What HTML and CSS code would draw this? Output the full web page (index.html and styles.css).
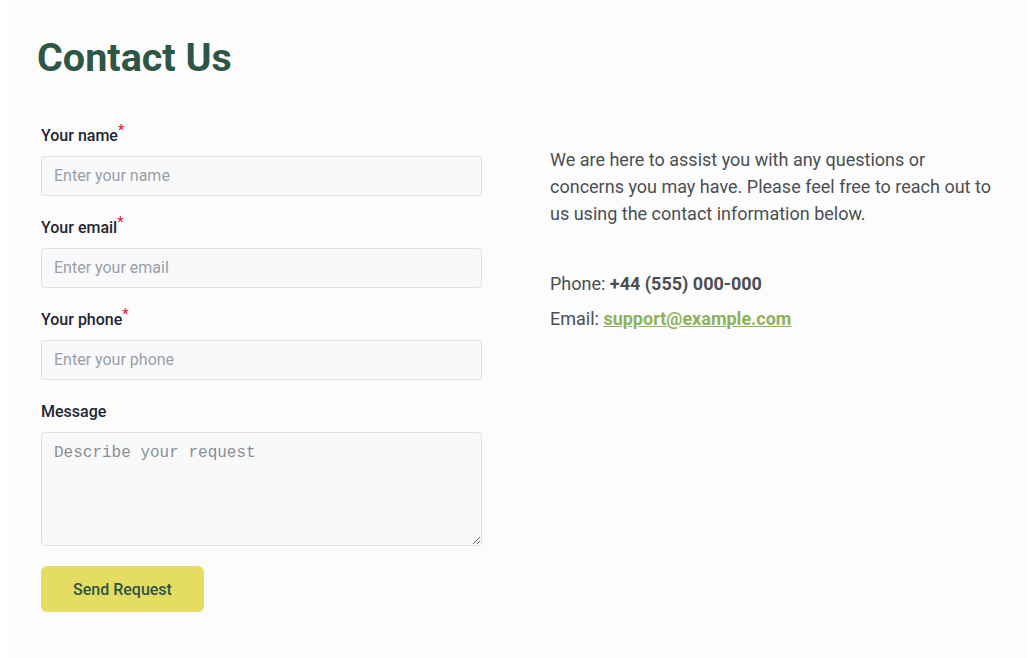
FILE: index.html
```html
<!DOCTYPE html>
<html lang="en">
<head>
  <meta charset="UTF-8">
  <title>Contact Us</title>
  <link rel="stylesheet" href="styles.css">
</head>
<body>

  <div class="contact-page">
    <h1>Contact Us</h1>

    <div class="contact-grid">
      <form class="contact-form">
        <div class="field">
          <label for="name">Your name<span class="req">*</span></label>
          <input type="text" id="name" placeholder="Enter your name">
        </div>
        <div class="field">
          <label for="email">Your email<span class="req">*</span></label>
          <input type="email" id="email" placeholder="Enter your email">
        </div>
        <div class="field">
          <label for="phone">Your phone<span class="req">*</span></label>
          <input type="text" id="phone" placeholder="Enter your phone">
        </div>
        <div class="field">
          <label for="message">Message</label>
          <textarea id="message" placeholder="Describe your request"></textarea>
        </div>
        <button type="submit">Send Request</button>
      </form>

      <div class="contact-info">
        <p class="intro">We are here to assist you with any questions or concerns you may have. Please feel free to reach out to us using the contact information below.</p>
        <p class="line">Phone: <strong>+44 (555) 000-000</strong></p>
        <p class="line">Email: <a href="#">support@example.com</a></p>
      </div>
    </div>
  </div>

</body>
</html>
```

FILE: styles.css
```css
body {
  font-family: Roboto, "Liberation Sans", Arial, sans-serif;
  background-color: #ffffff;
  margin: 0 8px;
}

.contact-page {
  background-color: #fcfcfc;
  padding: 33px 33px 46px 33px;
}

h1 {
  margin: 0 0 41px -4px;
  font-size: 39.5px;
  line-height: 50px;
  font-weight: 700;
  color: #2e5646;
}

.contact-grid {
  display: grid;
  grid-template-columns: 441px 1fr;
  gap: 68px;
}

.field {
  margin-bottom: 20px;
}

.field label {
  display: block;
  font-size: 16px;
  line-height: 24px;
  font-weight: 500;
  color: #1f2633;
  margin-bottom: 8px;
}

.req {
  color: #e11d48;
  font-size: 14px;
  vertical-align: 6px;
  line-height: 0;
}

.field input, .field textarea {
  display: block;
  box-sizing: border-box;
  width: 100%;
  background-color: #f8f9fb;
  border: 1px solid #dfe1e4;
  border-radius: 4px;
  color: #1f2633;
}

.field input {
  height: 40px;
  padding: 0 12px 1px 12px;
  font-family: Roboto, "Liberation Sans", Arial, sans-serif;
  font-size: 16px;
}

.field textarea {
  height: 114px;
  padding: 8px 12px;
  font-family: "Liberation Mono", monospace;
  font-size: 16px;
  line-height: 24px;
}

.field input::placeholder {
  color: #9a9fa7;
}

.field textarea::placeholder {
  color: #8b8e93;
}

button {
  display: block;
  margin-top: 0;
  width: 163px;
  height: 46px;
  background-color: #e4dd62;
  color: #2e5646;
  border: none;
  border-radius: 6px;
  font-family: Roboto, "Liberation Sans", Arial, sans-serif;
  font-size: 16px;
  font-weight: 500;
  cursor: pointer;
}

.contact-info {
  padding-top: 22px;
  color: #4b4f52;
  font-size: 18px;
}

.intro {
  margin: 0 0 43px 0;
  line-height: 27px;
}

.line {
  margin: 0 0 8px 0;
  line-height: 27px;
}

.line strong {
  font-weight: 700;
}

.line a {
  color: #8fb15a;
  font-weight: 700;
}
```
